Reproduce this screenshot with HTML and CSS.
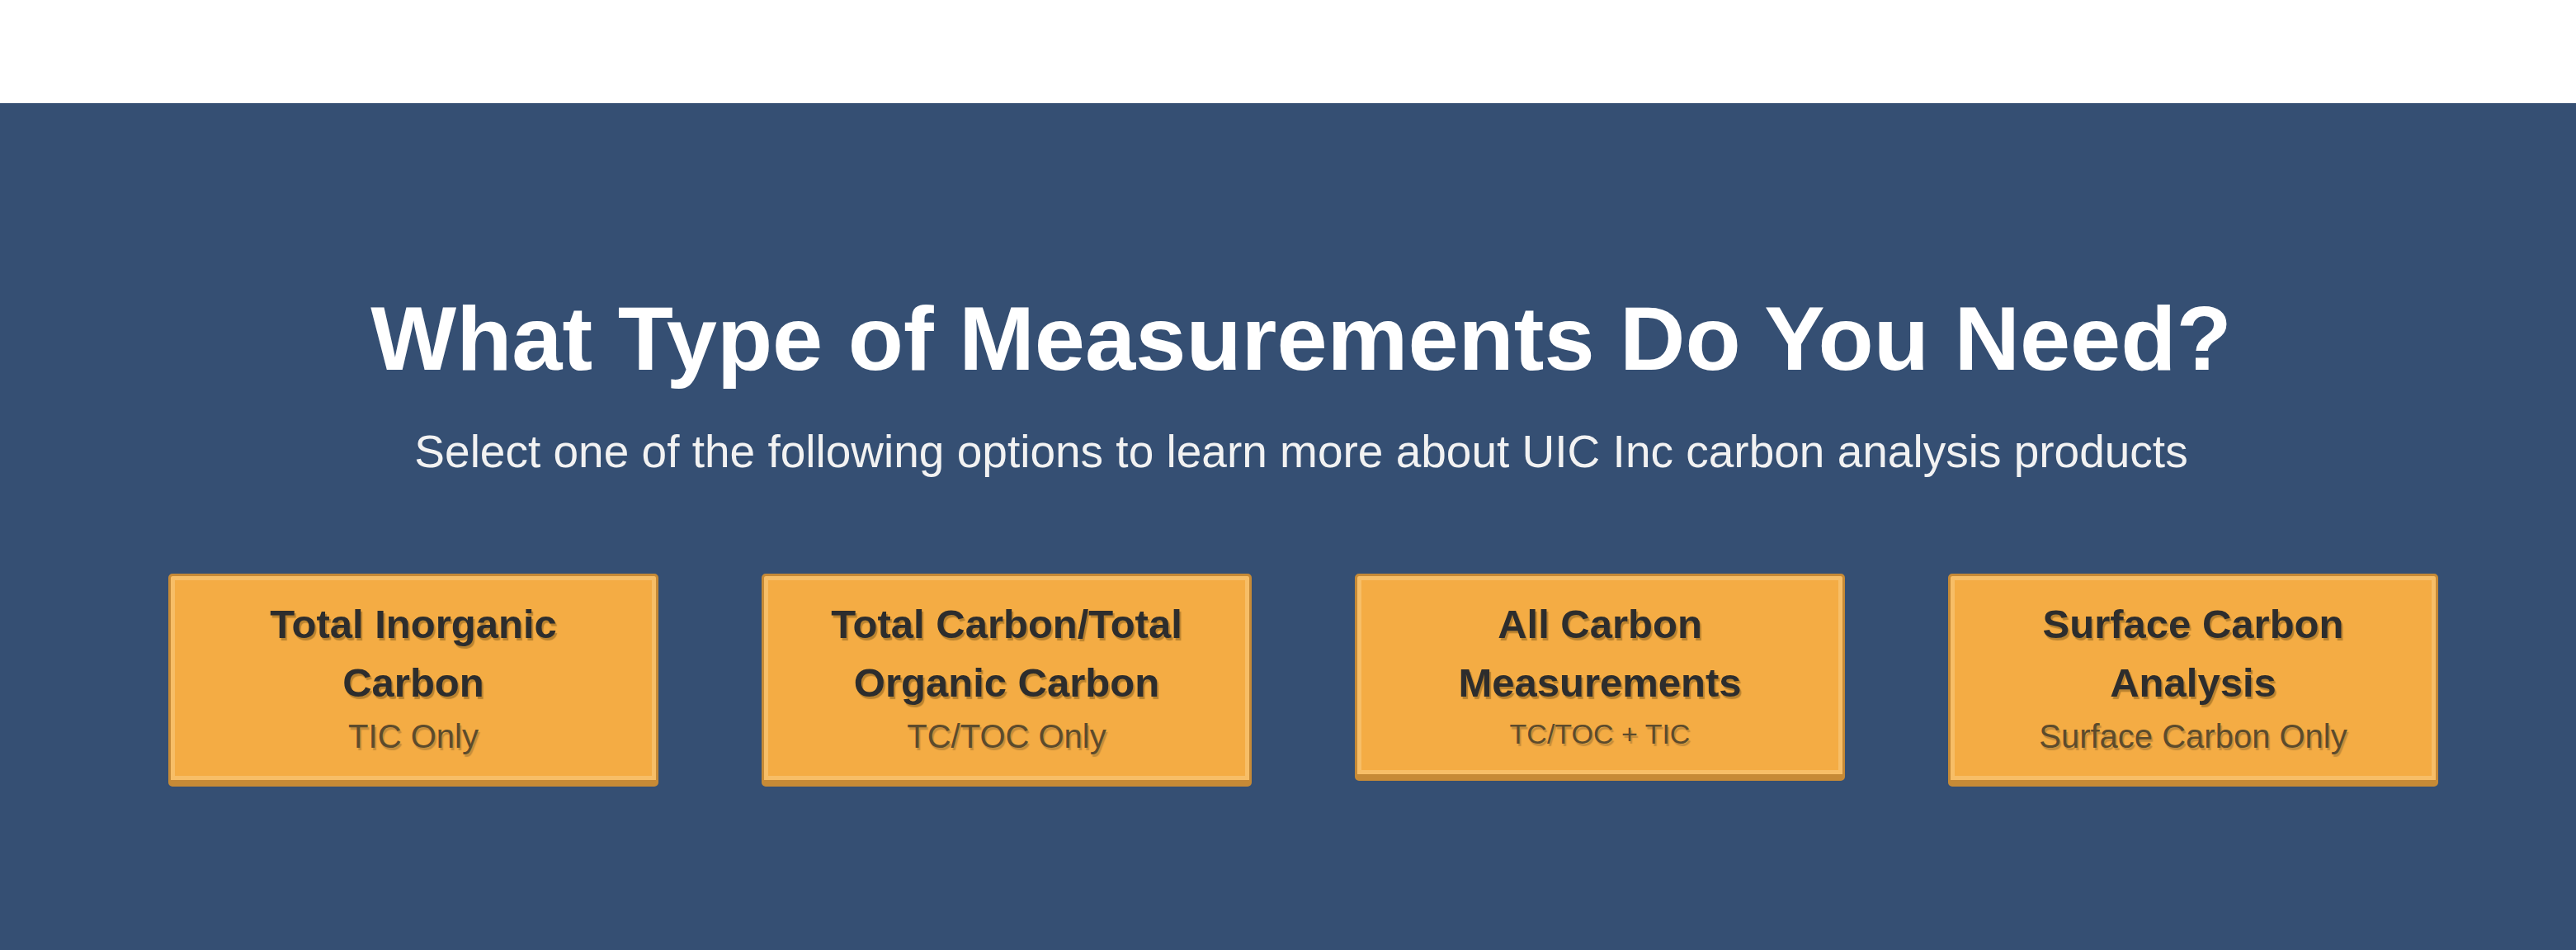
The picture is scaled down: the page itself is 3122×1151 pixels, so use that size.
FILE: index.html
```html
<!DOCTYPE html>
<html lang="en">
<head>
<meta charset="utf-8">
<title>What Type of Measurements Do You Need?</title>
<link rel="stylesheet" href="styles.css">
</head>
<body>
<div class="topbar"></div>
<section class="measure">
  <div class="intro">
    <h2 class="intro-title">What Type of Measurements Do You Need?</h2>
    <p class="intro-sub">Select one of the following options to learn more about UIC Inc carbon analysis products</p>
  </div>
  <div class="cards">
    <a class="card" href="#">
      <span class="card-title">Total Inorganic<br>Carbon</span>
      <span class="card-sub">TIC Only</span>
    </a>
    <a class="card" href="#">
      <span class="card-title">Total Carbon/Total<br>Organic Carbon</span>
      <span class="card-sub">TC/TOC Only</span>
    </a>
    <a class="card" href="#">
      <span class="card-title">All Carbon<br>Measurements</span>
      <span class="card-sub card-sub-small">TC/TOC + TIC</span>
    </a>
    <a class="card" href="#">
      <span class="card-title">Surface Carbon<br>Analysis</span>
      <span class="card-sub">Surface Carbon Only</span>
    </a>
  </div>
</section>
</body>
</html>
```

FILE: styles.css
```css
html, body {
  margin: 0;
  padding: 0;
}
body {
  font-family: "Liberation Sans", Arial, sans-serif;
  background: #ffffff;
  min-height: 1151px;
  display: flex;
  flex-direction: column;
}
.topbar {
  height: 125px;
  background: #ffffff;
}
.measure {
  flex: 1;
  background: #354f73;
  padding: 224px 0 100px 0;
}
.intro {
  text-align: center;
  padding-left: 32px;
}
.intro-title {
  margin: 0;
  font-size: 110px;
  line-height: 121px;
  font-weight: 700;
  color: #ffffff;
}
.intro-sub {
  margin: 44px 0 0 0;
  font-size: 55px;
  line-height: 66px;
  color: #f2f2f2;
}
.cards {
  display: flex;
  align-items: flex-start;
  gap: 125px;
  padding-left: 204px;
  margin-top: 115px;
}
.card {
  box-sizing: border-box;
  width: 594px;
  flex: 0 0 594px;
  display: flex;
  flex-direction: column;
  align-items: center;
  text-align: center;
  text-decoration: none;
  background: #f4ac44;
  border: 3px solid #c68a36;
  border-bottom-width: 8px;
  border-radius: 5px;
  box-shadow: inset 0 0 0 5px #f7be67;
  padding: 23px 10px 23px;
}
.card-title {
  font-size: 49px;
  line-height: 71px;
  font-weight: 700;
  color: #2d2d2d;
  text-shadow: 2px 3px 1px #b9822f;
}
.card-sub {
  font-size: 40px;
  line-height: 59px;
  color: #5c4b2c;
  text-shadow: 2px 3px 1px #c48c3b;
}
.card-sub-small {
  font-size: 34px;
  line-height: 52px;
}
```
